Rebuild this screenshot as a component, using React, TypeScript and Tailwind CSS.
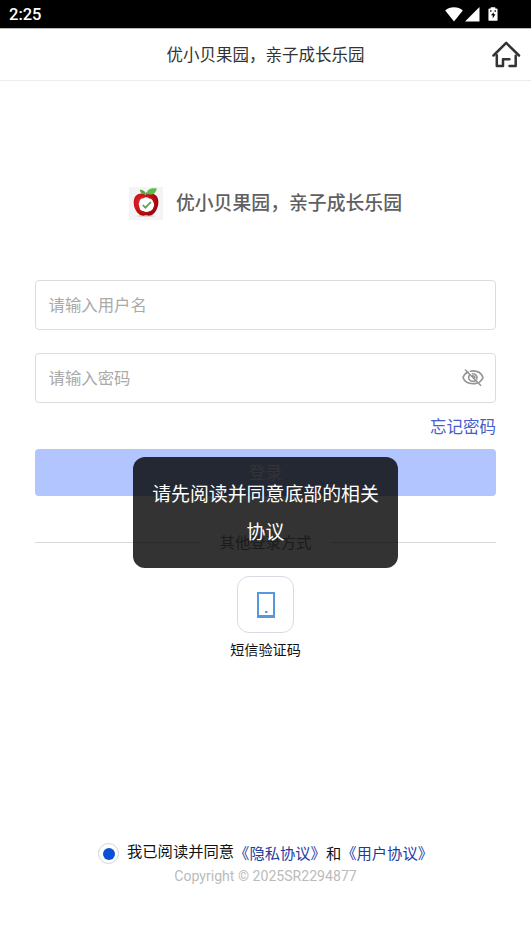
import React from "react";

const StatusBar = () => (
  <div className="flex h-7 items-center justify-between bg-black pl-[9px] pr-[33px] text-white">
    <span className="mt-[3px] font-['Roboto',sans-serif] text-[16.5px] font-medium leading-none">
      2:25
    </span>
    <div className="flex items-center">
      <svg width="18" height="15" viewBox="0 0 18 15" fill="currentColor">
        <path d="M9 14.5 0.2 3.4C2.6 1.4 5.6 0.3 9 0.3s6.400 1.100 8.800 3.100z" />
      </svg>
      <svg className="ml-0.5" width="15" height="15" viewBox="0 0 15 15" fill="currentColor">
        <path d="M14.500 0v14.500H0z" />
      </svg>
      <svg className="ml-2" width="10" height="16" viewBox="0 0 11 16">
        <path
          fill="currentColor"
          d="M3 0.500h5v1.500h1.500q1 0 1 1V14.500q0 1-1 1h-8q-1 0-1-1V3q0-1 1-1H3z"
        />
        <path
          fill="#000"
          d="M6.300 6 3.200 9.500h2v3.500l3-4.700H6.300zM2.300 4h1.500v1.500H2.300zM7.200 4h1.500v1.500H7.200z"
        />
      </svg>
    </div>
  </div>
);

const HomeIcon = () => (
  <svg
    width="30"
    height="28"
    viewBox="0 0 30 28"
    fill="none"
    stroke="#333"
    strokeWidth="2.500"
    strokeLinecap="round"
    strokeLinejoin="round"
  >
    <path d="M2.500 14.500 15.200 1.900 28 14.500" />
    <path d="M5.800 14.200v10.900h6.200v-6.800h6.400" />
    <path d="M24.700 14.700v10.400h-6.200" />
  </svg>
);

const AppleLogo = () => (
  <svg width="34" height="34" viewBox="0 0 34 34">
    <defs>
      <radialGradient id="apple" cx="35%" cy="38%" r="70%">
        <stop offset="0" stopColor="#e92b30" />
        <stop offset="0.550" stopColor="#cb101a" />
        <stop offset="1" stopColor="#8e0309" />
      </radialGradient>
    </defs>
    <rect width="34" height="33" y="1" fill="#f4f4f7" />
    <ellipse cx="17" cy="30" rx="9" ry="1.200" fill="#d9d5d7" />
    <path
      fill="url(#apple)"
      d="M17 9c3-2.200 7.500-2 10 .5 3.300 3.300 2.900 9.500.6 14-1.700 3.500-4.600 6.300-8 6.200-1.200 0-1.700-.4-2.600-.4s-1.500.4-2.700.4c-3.300 0-6.200-2.800-7.900-6.200-2.200-4.500-2.500-10.700.7-14 2.500-2.500 7-2.700 9.900-.5z"
    />
    <path d="M17.500 10c0-2 .3-3 1-4" stroke="#65421d" strokeWidth="1.200" fill="none" />
    <path d="M17.500 7.500c1-5 5.500-6 10.300-5-.7 5-5.500 7.800-10.300 5z" fill="#5dbb4a" />
    <path d="M17 8c-1-3.200-3.500-4-6.200-4.200.4 3.400 3 5 6.200 4.200z" fill="#51a83b" />
    <path
      fill="#fff"
      d="M14.500 12.200q3-1.800 5.800.2 3.200.2 3.800 3.300 2 3 .2 5.900-.8 3.200-4 3.600-3.200 1.600-6-.3-3.300-.4-3.800-3.500-1.800-3 0-5.800.3-3.200 4-3.400z"
    />
    <path d="m13.800 19 2.600 2.700 5.500-5.700" stroke="#55a548" strokeWidth="1.800" fill="none" />
  </svg>
);

const HiddenEyeIcon = () => (
  <svg
    width="22"
    height="18"
    viewBox="0 0 22 18"
    fill="none"
    stroke="#949494"
    strokeWidth="1.600"
    strokeLinecap="round"
  >
    <path d="M6 3C3.500 4.200 1.700 6.400 1 8.600c1.400 3.900 5.400 6.200 10 6.200 1.500 0 2.900-.3 4.200-.8M8.500 2.200c.8-.2 1.600-.3 2.500-.3 4.800 0 8.700 2.800 10 6.700-.6 1.900-1.900 3.400-3.500 4.500" />
    <path d="M7.300 6.200c-1.800 2.700 0 6.200 3.700 6.200.9 0 1.700-.2 2.400-.7M10.500 4.700c3.200-.2 5.200 2.600 4.200 5.200" />
    <path d="M10.700 6.900c1.400 0 2.100.8 2.100 1.900M3.500 1l15 15.300" />
  </svg>
);

const Field = ({
  placeholder,
  type = "text",
  children,
}: {
  placeholder: string;
  type?: string;
  children?: React.ReactNode;
}) => (
  <label className="flex h-[50px] items-center rounded border border-[#dcdcdc] bg-white pl-[12.5px] pr-[11px]">
    <input
      type={type}
      placeholder={placeholder}
      className="min-w-0 flex-1 bg-transparent pb-0.5 text-[16.4px] outline-none placeholder:text-[#aaa]"
    />
    {children}
  </label>
);

const Toast = ({ message }: { message: string }) => (
  <div className="absolute left-[133px] top-[457px] flex h-[111px] w-[265px] items-center justify-center rounded-xl bg-black/80 px-[19px] pb-0.5 text-center text-[18.9px] leading-[38px] text-white">
    {message}
  </div>
);

const App = () => {
  return (
    <div className="relative flex h-[945px] w-[531px] flex-col overflow-hidden bg-white font-['Noto_Sans_CJK_SC',sans-serif] text-[#333]">
      <StatusBar />

      <header className="grid h-[53px] grid-cols-[1fr_auto_1fr] items-center border-b border-t border-b-[#ececec] border-t-[#bbb]">
        <h1 className="col-start-2 pb-0.5 text-[16.5px] leading-6">优小贝果园，亲子成长乐园</h1>
        <button className="mr-2.5 justify-self-end" aria-label="首页">
          <HomeIcon />
        </button>
      </header>

      <main className="flex flex-col px-[35px] pt-[105px]">
        <div className="flex h-[34px] items-center justify-center gap-[13px]">
          <AppleLogo />
          <h2 className="pb-px text-[18.85px] font-medium leading-none text-[#606060]">
            优小贝果园，亲子成长乐园
          </h2>
        </div>

        <form className="mt-[60px] flex flex-col">
          <Field placeholder="请输入用户名" />
          <div className="mt-[23px]">
            <Field placeholder="请输入密码" type="password">
              <HiddenEyeIcon />
            </Field>
          </div>
          <a className="mt-[11px] self-end text-[16.5px] leading-6 text-[#4560c8]">忘记密码</a>
          <button
            type="button"
            className="mt-[11px] h-[47px] rounded bg-[#b3c5ff] text-[16.5px] text-white"
          >
            登录
          </button>
        </form>

        <div className="mt-[34px] flex h-6 items-center gap-[19px] text-[15.3px] text-[#888]">
          <span className="h-px flex-1 bg-[#d8d8d8]" />
          <span className="pb-0.5">其他登录方式</span>
          <span className="h-px flex-1 bg-[#d8d8d8]" />
        </div>

        <div className="mt-[22px] flex flex-col items-center">
          <button className="flex size-[57px] items-center justify-center rounded-xl border border-[#d9dae3]">
            <svg width="18" height="27" viewBox="0 0 18 27">
              <path d="M1 2h16v24H1z" fill="none" stroke="#5698df" strokeWidth="2" />
              <path d="M0 24h18v3H0zM8 20h2.500v2H8z" fill="#5698df" />
            </svg>
          </button>
          <span className="mt-1.5 text-[14.1px] leading-5 text-[#111]">短信验证码</span>
        </div>
      </main>

      <footer className="mt-auto flex h-[105px] flex-col items-center">
        <div className="flex h-6 items-center text-[15.3px] leading-6 text-[#111]">
          <span className="mr-2 mt-[3px] flex size-[21px] items-center justify-center rounded-full border border-[#d5d5d5]">
            <span className="size-3 rounded-full bg-[#0b50d5]" />
          </span>
          <span className="-mt-1">我已阅读并同意</span>
          <a className="text-[#1e3c9f]">《隐私协议》</a>
          <span>和</span>
          <a className="text-[#1e3c9f]">《用户协议》</a>
        </div>
        <p className="mt-0.5 font-['Roboto',sans-serif] text-[14.1px] leading-5 text-[#bbb]">
          Copyright © 2025SR2294877
        </p>
      </footer>

      <Toast message="请先阅读并同意底部的相关协议" />
    </div>
  );
};

export default App;
